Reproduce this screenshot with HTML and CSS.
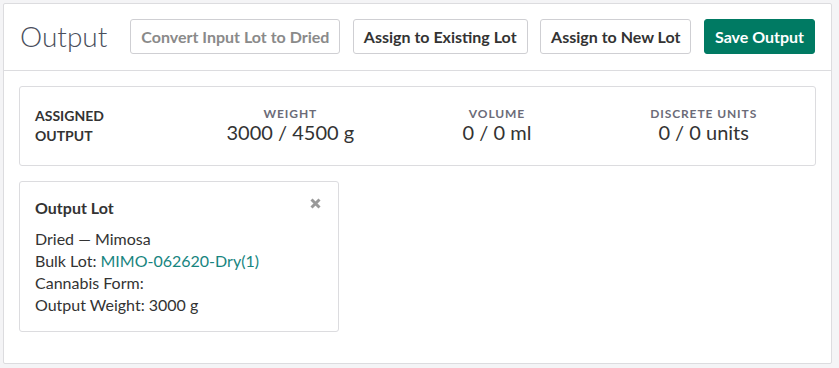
FILE: index.html
```html
<html>
    <head>
        <title>Output</title>
        <link rel="stylesheet" href="styles.css">
    </head>
    <body>
        <div class="panel">
            <div class="head">
                <h1 class="title">Output</h1>
                <button class="btn muted">Convert Input Lot to Dried</button>
                <button class="btn">Assign to Existing Lot</button>
                <button class="btn">Assign to New Lot</button>
                <button class="btn save">Save Output</button>
            </div>
            <div class="body">
                <div class="summary">
                    <div class="label">Assigned<br>Output</div>
                    <div class="stat">
                        <p class="name">Weight</p>
                        <p class="value">3000 / 4500 g</p>
                    </div>
                    <div class="stat">
                        <p class="name">Volume</p>
                        <p class="value">0 / 0 ml</p>
                    </div>
                    <div class="stat">
                        <p class="name">Discrete Units</p>
                        <p class="value">0 / 0 units</p>
                    </div>
                </div>
                <div class="lot">
                    <svg class="close" width="11" height="11" viewBox="0 0 11 11">
                        <path d="M1.5 1.5 L9.5 9.5 M9.5 1.5 L1.5 9.5" stroke="#9a9a9a" stroke-width="3" stroke-linecap="butt"/>
                    </svg>
                    <h2>Output Lot</h2>
                    <p>Dried &mdash; Mimosa</p>
                    <p>Bulk Lot: <a href="#">MIMO-062620-Dry(1)</a></p>
                    <p>Cannabis Form:</p>
                    <p>Output Weight: 3000 g</p>
                </div>
            </div>
        </div>
    </body>
</html>
```

FILE: styles.css
```css
*{
    margin: 0;
    padding: 0;
    box-sizing: border-box;
    font-family: Lato, "Open Sans", sans-serif;
}
body{
    background: #f4f4f6;
    padding: 3px 7px 0 3px;
    color: #333;
}
.panel{
    background: #fff;
    border: 1px solid #dcdcdf;
    border-radius: 2px;
    height: 361px;
}
.head{
    display: flex;
    align-items: center;
    padding: 14px 15px 16px 16px;
    border-bottom: 1px solid #dcdcdf;
    height: 67px;
}
.title{
    font-size: 28px;
    font-weight: 300;
    color: #4a4f5c;
    margin-right: 23px;
    margin-top: -1px;
    flex: none;
}
.btn{
    flex: none;
    white-space: nowrap;
    height: 35px;
    padding: 0 10px;
    border: 1px solid #cfcfd3;
    border-radius: 3px;
    background: #fff;
    color: #333;
    font-family: Lato, sans-serif;
    font-size: 16px;
    font-weight: 700;
    margin-right: 12.5px;
}
.btn.muted{
    color: #8a8a8a;
}
.btn.save{
    background: #007a63;
    border-color: #007a63;
    color: #fff;
    margin-right: 0;
}
.body{
    padding: 15px 15px 0 15px;
}
.summary{
    display: grid;
    grid-template-columns: 152px 1fr 1fr 1fr;
    align-items: center;
    border: 1px solid #dcdcdf;
    border-radius: 3px;
    height: 80px;
    padding: 0 8px 0 15px;
}
.label{
    font-size: 14px;
    font-weight: 700;
    text-transform: uppercase;
    line-height: 20px;
    color: #333;
}
.stat{
    text-align: center;
    margin-top: -2px;
}
.name{
    font-size: 12px;
    font-weight: 700;
    letter-spacing: 0.9px;
    text-transform: uppercase;
    color: #6b6b78;
    line-height: 14px;
}
.value{
    font-size: 20px;
    color: #333;
    line-height: 22px;
}
.lot{
    position: relative;
    width: 320px;
    margin-top: 15px;
    border: 1px solid #dcdcdf;
    border-radius: 3px;
    padding: 15px 15px 15px 15px;
    font-size: 16px;
    line-height: 22px;
}
.lot h2{
    font-size: 16px;
    font-weight: 700;
    margin-bottom: 9px;
}
.lot a{
    color: #17857f;
    text-decoration: none;
}
.close{
    position: absolute;
    top: 16px;
    right: 17px;
}
```
